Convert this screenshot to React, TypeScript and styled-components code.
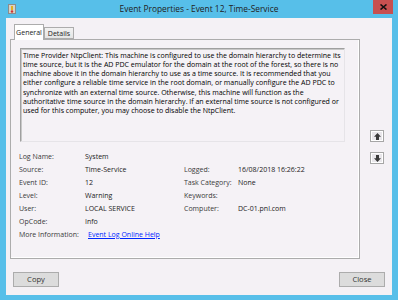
import React from "react";
import styled, { createGlobalStyle } from "styled-components";

const Global = createGlobalStyle`
  html, body { margin: 0; padding: 0; background: #57bfe9; }
  body { width: 398px; height: 300px; overflow: hidden; }
  * { box-sizing: border-box; }
`;

const Window = styled.div`
  width: 398px;
  height: 300px;
  background: #57bfe9;
  display: flex;
  flex-direction: column;
  font-family: "Open Sans", "Noto Sans", sans-serif;
`;

const TitleBar = styled.div`
  height: 18px;
  display: flex;
  align-items: center;
  position: relative;
  padding-left: 8px;
`;

const TitleText = styled.div`
  position: absolute;
  left: 0;
  right: 0;
  top: 3px;
  text-align: center;
  font-size: 8.4px;
  line-height: 12px;
  color: #222;
`;

const CloseBtn = styled.div`
  position: absolute;
  top: 0;
  left: 373px;
  width: 20px;
  height: 14px;
  background: #c75050;
  display: flex;
  align-items: center;
  justify-content: center;
`;

const Body = styled.div`
  flex: 1;
  margin: 0 6px 5px 6px;
  background: #f4f1f5;
  display: flex;
  flex-direction: column;
  padding: 6px 7px 8px 4px;
`;

const Main = styled.div`
  display: flex;
  height: 235px;
`;

const TabArea = styled.div`
  width: 350px;
  display: flex;
  flex-direction: column;
`;

const TabStrip = styled.div`
  display: flex;
  align-items: flex-end;
  height: 15px;
  padding-left: 4px;
  position: relative;
  z-index: 1;
`;

const Tab = styled.div<{ $active?: boolean }>`
  width: 30px;
  height: ${(p) => (p.$active ? "16px" : "12px")};
  margin-bottom: ${(p) => (p.$active ? "-1px" : "0")};
  background: ${(p) => (p.$active ? "#ffffff" : "linear-gradient(#f2f2f2, #e5e5e5)")};
  border: 1px solid #acacac;
  border-bottom: ${(p) => (p.$active ? "none" : "1px solid #acacac")};
  font-size: 7px;
  line-height: 11px;
  color: #222;
  text-align: center;
  padding-top: ${(p) => (p.$active ? "2px" : "0")};
`;

const Panel = styled.div`
  flex: 1;
  border: 1px solid #acacac;
  background: #f5f2f6;
  box-shadow: inset -1px -1px 0 #ffffff;
  padding: 8px 14px 0 8px;
  display: flex;
  flex-direction: column;
`;

const Description = styled.div`
  margin-left: 1px;
  height: 94px;
  border-top: 1px solid #a0a0a0;
  border-left: 1px solid #a0a0a0;
  border-right: 1px solid #e6e4e8;
  border-bottom: 1px solid #e6e4e8;
  box-shadow: inset 1px 1px 0 #c8c8c8;
  background: #f5f2f6;
  padding: 1.5px 1px 0 2px;
  font-size: 7.04px;
  line-height: 9.33px;
  color: #000;
  white-space: pre;
  overflow: hidden;
`;

const InfoGrid = styled.div`
  margin-top: 8px;
  display: grid;
  grid-template-columns: 66px 99px 54px 1fr;
  grid-auto-rows: 13px;
  align-items: center;
  font-size: 7px;
  color: #333;
`;

const Label = styled.div`
  white-space: nowrap;
  color: #3a3a3a;
`;

const Value = styled.div<{ $wide?: boolean }>`
  white-space: nowrap;
  color: #1a1a1a;
  grid-column: ${(p) => (p.$wide ? "span 3" : "auto")};
`;

const Link = styled.span`
  color: #0026ff;
  text-decoration: underline;
  margin-left: 3px;
`;

const Side = styled.div`
  flex: 1;
  display: flex;
  flex-direction: column;
  padding-top: 106px;
  padding-left: 10px;
  gap: 10px;
`;

const ArrowBtn = styled.div`
  width: 14px;
  height: 12px;
  border: 1px solid #a6a6a6;
  background: #e9e7eb;
  box-shadow: inset 1px 1px 0 #ffffff, inset -1px -1px 0 #ffffff;
  display: flex;
  align-items: center;
  justify-content: center;
`;

const ButtonRow = styled.div`
  display: flex;
  justify-content: space-between;
  margin-top: 13px;
  padding-left: 3px;
`;

const Button = styled.div`
  width: 46px;
  height: 15px;
  background: #dcdcdc;
  border: 1px solid #acacac;
  font-size: 7.6px;
  line-height: 13px;
  text-align: center;
  color: #333;
`;

const Arrow = ({ down }: { down?: boolean }) => (
  <svg width="7" height="7" viewBox="0 0 7 7" style={{ transform: down ? "rotate(180deg)" : undefined }}>
    <path d="M3.5 0 L7 3.8 H5 V7 H2 V3.8 H0 Z" fill="#3a3a3a" />
  </svg>
);

const text = [
  "Time Provider NtpClient: This machine is configured to use the domain hierarchy to determine its",
  "time source, but it is the AD PDC emulator for the domain at the root of the forest, so there is no",
  "machine above it in the domain hierarchy to use as a time source. It is recommended that you",
  "either configure a reliable time service in the root domain, or manually configure the AD PDC to",
  "synchronize with an external time source. Otherwise, this machine will function as the",
  "authoritative time source in the domain hierarchy. If an external time source is not configured or",
  "used for this computer, you may choose to disable the NtpClient.",
].join("\n");

export default function App() {
  return (
    <>
      <Global />
      <Window>
        <TitleBar>
          <svg width="8" height="10" viewBox="0 0 8 10">
            <rect x="0.5" y="0.5" width="7" height="9" fill="#d9d2c4" stroke="#8c8c8c" />
            <rect x="3" y="2" width="2" height="4" fill="#e0b020" />
            <circle cx="4" cy="7.5" r="1.2" fill="#d03030" />
          </svg>
          <TitleText>Event Properties - Event 12, Time-Service</TitleText>
          <CloseBtn>
            <svg width="7" height="6" viewBox="0 0 7 6">
              <path d="M0.5 0.5 L6.5 5.5 M6.5 0.5 L0.5 5.5" stroke="#111" strokeWidth="1.6" />
            </svg>
          </CloseBtn>
        </TitleBar>
        <Body>
          <Main>
            <TabArea>
              <TabStrip>
                <Tab $active>General</Tab>
                <Tab>Details</Tab>
              </TabStrip>
              <Panel>
                <Description>{text}</Description>
                <InfoGrid>
                  <Label>Log Name:</Label>
                  <Value $wide>System</Value>
                  <Label>Source:</Label>
                  <Value>Time-Service</Value>
                  <Label>Logged:</Label>
                  <Value>16/08/2018 16:26:22</Value>
                  <Label>Event ID:</Label>
                  <Value>12</Value>
                  <Label>Task Category:</Label>
                  <Value>None</Value>
                  <Label>Level:</Label>
                  <Value>Warning</Value>
                  <Label>Keywords:</Label>
                  <Value></Value>
                  <Label>User:</Label>
                  <Value>LOCAL SERVICE</Value>
                  <Label>Computer:</Label>
                  <Value>DC-01.pnl.com</Value>
                  <Label>OpCode:</Label>
                  <Value $wide>Info</Value>
                  <Label>More Information:</Label>
                  <Value $wide>
                    <Link>Event Log Online Help</Link>
                  </Value>
                </InfoGrid>
              </Panel>
            </TabArea>
            <Side>
              <ArrowBtn>
                <Arrow />
              </ArrowBtn>
              <ArrowBtn>
                <Arrow down />
              </ArrowBtn>
            </Side>
          </Main>
          <ButtonRow>
            <Button>Copy</Button>
            <Button>Close</Button>
          </ButtonRow>
        </Body>
      </Window>
    </>
  );
}
